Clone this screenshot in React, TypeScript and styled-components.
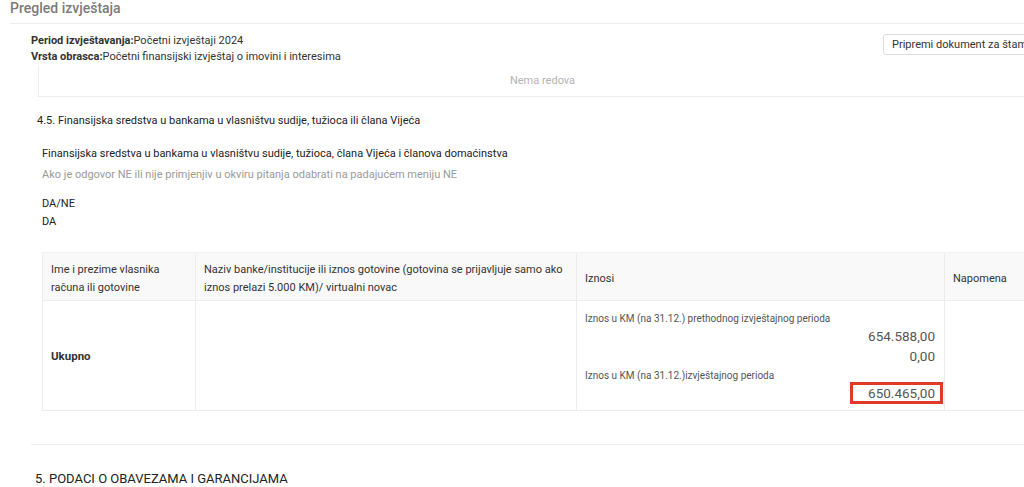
import React from "react";
import styled, { createGlobalStyle } from "styled-components";

const Global = createGlobalStyle`
  html, body { margin: 0; padding: 0; background: #fff; overflow: hidden; }
  body { font-family: Roboto, "Liberation Sans", Arial, sans-serif; color: #333; }
  * { box-sizing: border-box; }
`;

const Page = styled.div`
  width: 1080px;
  padding-left: 10px;
`;

const Title = styled.h2`
  margin: 0;
  font-size: 14px;
  font-weight: 500;
  color: #7b7b7b;
  line-height: 17px;
  padding: 0 0 6px 0;
  border-bottom: 1px solid #ececec;
`;

const Section = styled.div`
  padding-left: 21px;
`;

const InfoRow = styled.div`
  display: flex;
  justify-content: space-between;
  align-items: flex-start;
  padding-top: 9px;
  padding-right: 7px;
`;

const InfoLines = styled.div`
  display: flex;
  flex-direction: column;
  font-size: 11px;
  line-height: 16px;
  color: #333;
`;

const Label = styled.b`
  font-weight: 700;
`;

const PrintButton = styled.button`
  margin-top: 1px;
  width: 190px;
  text-align: left;
  font-family: inherit;
  font-size: 11px;
  color: #333;
  background: #fff;
  border: 1px solid #dcdcdc;
  border-radius: 3px;
  height: 21px;
  padding: 0 8px;
  white-space: nowrap;
`;

const EmptyBox = styled.div`
  margin-left: 7px;
  width: 1008px;
  height: 32px;
  border-left: 1px solid #ececec;
  border-bottom: 1px solid #ececec;
  display: flex;
  align-items: center;
  justify-content: center;
  font-size: 11px;
  color: #b3b3b3;
`;

const SubTitle = styled.div`
  margin: 17px 0 0 6px;
  font-size: 11px;
  line-height: 14px;
  color: #222;
`;

const Question = styled.div`
  margin: 19px 0 0 11px;
  display: flex;
  flex-direction: column;
`;

const QText = styled.div`
  font-size: 11px;
  line-height: 14px;
  color: #222;
`;

const Hint = styled.div`
  margin-top: 7px;
  font-size: 11px;
  line-height: 14px;
  color: #9a9a9a;
`;

const Answer = styled.div`
  margin-top: 13px;
  font-size: 11px;
  line-height: 18px;
  color: #222;
`;

const Table = styled.div`
  margin: 21px 0 0 11px;
  display: grid;
  grid-template-columns: 153px 381px 368px 120px;
  border-left: 1px solid #ececec;
  border-top: 1px solid #f0f0f0;
`;

const HeadCell = styled.div`
  background: #f9f9f9;
  border-right: 1px solid #ececec;
  border-bottom: 1px solid #ececec;
  padding: 4px 8px 0 8px;
  height: 48px;
  display: flex;
  align-items: center;
  font-size: 11px;
  line-height: 18px;
  color: #333;
`;

const BodyCell = styled.div`
  border-right: 1px solid #ececec;
  border-bottom: 1px solid #ececec;
  height: 110px;
  padding: 0 8px;
  display: flex;
  align-items: center;
  font-size: 11px;
  color: #333;
`;

const TotalLabel = styled.b`
  font-weight: 700;
  font-size: 11.5px;
`;

const Amounts = styled.div`
  display: flex;
  flex-direction: column;
  align-self: flex-start;
  width: 100%;
  padding-top: 12px;
`;

const SmallLabel = styled.div<{ $gap?: number }>`
  font-size: 10px;
  line-height: 12px;
  color: #555;
  margin-top: ${(p) => p.$gap ?? 0}px;
`;

const Value = styled.div<{ $highlight?: boolean; $gap?: number }>`
  align-self: flex-end;
  text-align: right;
  font-size: 13.5px;
  line-height: 16px;
  color: #555;
  margin-top: ${(p) => p.$gap ?? 0}px;
  width: ${(p) => (p.$highlight ? "93px" : "auto")};
  padding: ${(p) => (p.$highlight ? "0 5px 0 0" : "0 1px 0 0")};
  border: ${(p) => (p.$highlight ? "3px solid #e23a28" : "none")};
  margin-right: ${(p) => (p.$highlight ? "-7px" : "0")};
`;

const Divider = styled.div`
  margin: 33px 0 0 0;
  border-top: 1px solid #ececec;
`;

const SectionHead = styled.div`
  margin: 26px 0 0 4px;
  font-size: 13px;
  line-height: 16px;
  color: #222;
`;

export default function App() {
  return (
    <>
      <Global />
      <Page>
        <Title>Pregled izvještaja</Title>
        <Section>
          <InfoRow>
            <InfoLines>
              <span>
                <Label>Period izvještavanja:</Label>Početni izvještaji 2024
              </span>
              <span>
                <Label>Vrsta obrasca:</Label>Početni finansijski izvještaj o imovini i interesima
              </span>
            </InfoLines>
            <PrintButton>Pripremi dokument za štampu</PrintButton>
          </InfoRow>
          <EmptyBox>Nema redova</EmptyBox>
          <SubTitle>4.5. Finansijska sredstva u bankama u vlasništvu sudije, tužioca ili člana Vijeća</SubTitle>
          <Question>
            <QText>Finansijska sredstva u bankama u vlasništvu sudije, tužioca, člana Vijeća i članova domaćinstva</QText>
            <Hint>Ako je odgovor NE ili nije primjenjiv u okviru pitanja odabrati na padajućem meniju NE</Hint>
            <Answer>
              DA/NE
              <br />
              DA
            </Answer>
          </Question>
          <Table>
            <HeadCell>Ime i prezime vlasnika računa ili gotovine</HeadCell>
            <HeadCell>Naziv banke/institucije ili iznos gotovine (gotovina se prijavljuje samo ako iznos prelazi 5.000 KM)/ virtualni novac</HeadCell>
            <HeadCell>Iznosi</HeadCell>
            <HeadCell>Napomena</HeadCell>
            <BodyCell>
              <TotalLabel>Ukupno</TotalLabel>
            </BodyCell>
            <BodyCell />
            <BodyCell>
              <Amounts>
                <SmallLabel>Iznos u KM (na 31.12.) prethodnog izvještajnog perioda</SmallLabel>
                <Value $gap={3}>654.588,00</Value>
                <Value $gap={4}>0,00</Value>
                <SmallLabel $gap={6}>Iznos u KM (na 31.12.)izvještajnog perioda</SmallLabel>
                <Value $highlight $gap={0}>650.465,00</Value>
              </Amounts>
            </BodyCell>
            <BodyCell />
          </Table>
          <Divider />
          <SectionHead>5. PODACI O OBAVEZAMA I GARANCIJAMA</SectionHead>
        </Section>
      </Page>
    </>
  );
}
